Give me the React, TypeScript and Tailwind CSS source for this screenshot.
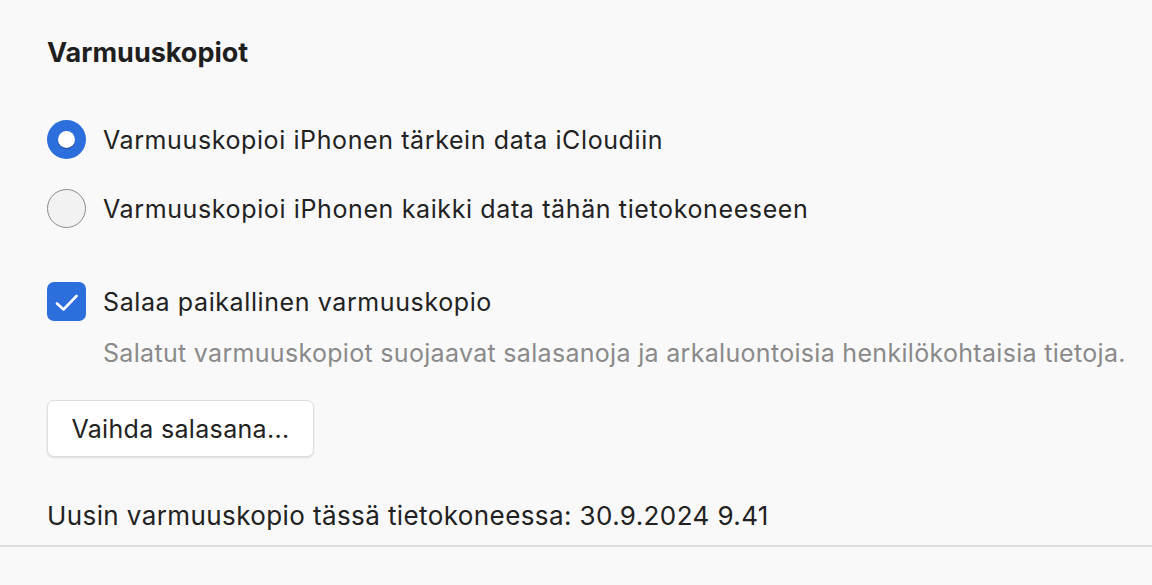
import React from "react";

export default function App() {
  return (
    <div className="w-[1152px] h-[585px] bg-[#f9f9f9] text-[#222222] font-['Inter','Liberation_Sans',sans-serif] overflow-hidden">
      <div className="flex flex-col pl-[47px] pt-[37px]">
        <h2 className="text-[27px] leading-[32px] font-bold tracking-[0px] text-[#1f1f1f]">Varmuuskopiot</h2>

        <div className="mt-[51px] flex items-center h-[39px] gap-[17px]">
          <div className="w-[39px] h-[39px] rounded-full bg-[#2c6edc] flex items-center justify-center">
            <div className="w-[17px] h-[17px] rounded-full bg-white shadow-[0_1px_1px_rgba(0,0,0,0.35)]" />
          </div>
          <span className="text-[25px] leading-[32px] tracking-[0.6px]">Varmuuskopioi iPhonen tärkein data iCloudiin</span>
        </div>

        <div className="mt-[30px] flex items-center h-[39px] gap-[17px]">
          <div className="w-[39px] h-[39px] rounded-full bg-[#f2f2f2] border-[1.5px] border-[#8c8c8c]" />
          <span className="text-[25px] leading-[32px] tracking-[0.62px]">Varmuuskopioi iPhonen kaikki data tähän tietokoneeseen</span>
        </div>

        <div className="mt-[54px] flex items-center h-[39px] gap-[17px]">
          <div className="w-[39px] h-[39px] rounded-[7px] bg-[#2c6edc] flex items-center justify-center">
            <svg width="39" height="39" viewBox="0 0 39 39" fill="none">
              <path d="M10 21.5 L16.5 27.5 L29.5 14" stroke="white" strokeWidth="2.6" strokeLinecap="round" strokeLinejoin="round" />
            </svg>
          </div>
          <span className="text-[25px] leading-[32px] tracking-[0.6px]">Salaa paikallinen varmuuskopio</span>
        </div>

        <p className="mt-[16px] pl-[56px] text-[25px] leading-[32px] tracking-[0.31px] text-[#8a8a8a]">
          Salatut varmuuskopiot suojaavat salasanoja ja arkaluontoisia henkilökohtaisia tietoja.
        </p>

        <div className="mt-[31px]">
          <button className="w-[267px] h-[57px] bg-white border border-[#dedede] rounded-[7px] shadow-[0_1px_2px_rgba(0,0,0,0.12)] text-[25px] leading-[32px] tracking-[0.33px] text-[#222222] flex items-center justify-center">
            Vaihda salasana...
          </button>
        </div>

        <p className="mt-[43px] text-[26px] leading-[32px] tracking-[0.4px]">Uusin varmuuskopio tässä tietokoneessa: 30.9.2024 9.41</p>
      </div>
      <div className="mt-[13px] h-[2px] bg-[#dcdcdc]" />
    </div>
  );
}
